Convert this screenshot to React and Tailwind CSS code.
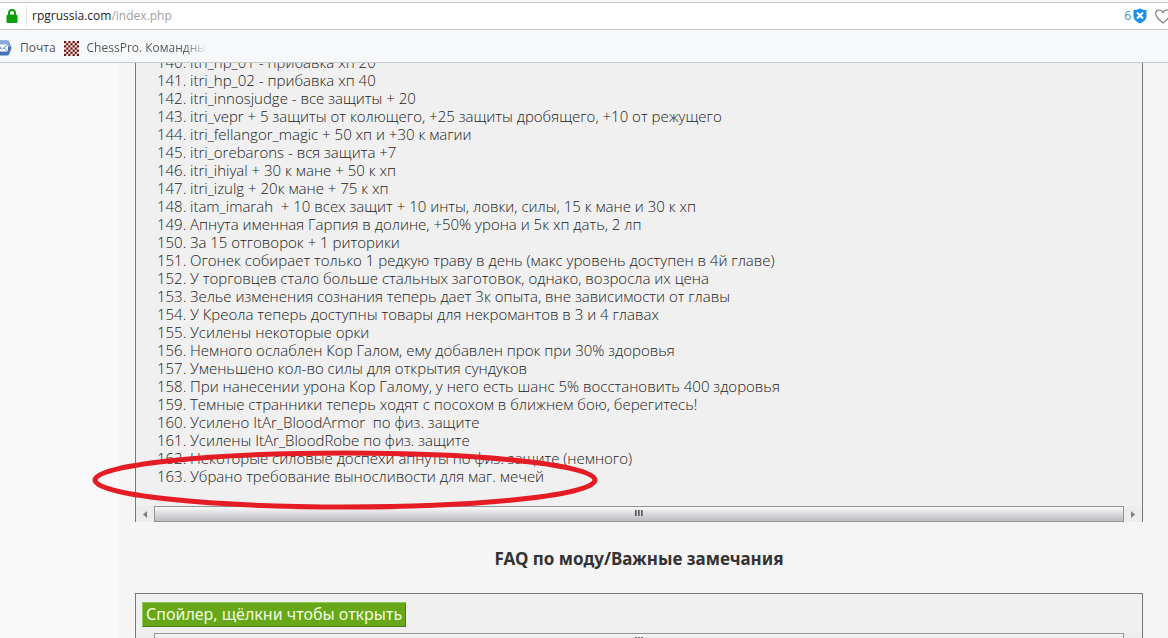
import React from 'react';

const changes = [
  'itri_hp_01 - прибавка хп 20',
  'itri_hp_02 - прибавка хп 40',
  'itri_innosjudge - все защиты + 20',
  'itri_vepr + 5 защиты от колющего, +25 защиты дробящего, +10 от режущего',
  'itri_fellangor_magic + 50 хп и +30 к магии',
  'itri_orebarons - вся защита +7',
  'itri_ihiyal + 30 к мане + 50 к хп',
  'itri_izulg + 20к мане + 75 к хп',
  'itam_imarah  + 10 всех защит + 10 инты, ловки, силы, 15 к мане и 30 к хп',
  'Апнута именная Гарпия в долине, +50% урона и 5к хп дать, 2 лп',
  'За 15 отговорок + 1 риторики',
  'Огонек собирает только 1 редкую траву в день (макс уровень доступен в 4й главе)',
  'У торговцев стало больше стальных заготовок, однако, возросла их цена',
  'Зелье изменения сознания теперь дает 3к опыта, вне зависимости от главы',
  'У Креола теперь доступны товары для некромантов в 3 и 4 главах',
  'Усилены некоторые орки',
  'Немного ослаблен Кор Галом, ему добавлен прок при 30% здоровья',
  'Уменьшено кол-во силы для открытия сундуков',
  'При нанесении урона Кор Галому, у него есть шанс 5% восстановить 400 здоровья',
  'Темные странники теперь ходят с посохом в ближнем бою, берегитесь!',
  'Усилено ItAr_BloodArmor  по физ. защите',
  'Усилены ItAr_BloodRobe по физ. защите',
  'Некоторые силовые доспехи апнуты по физ. защите (немного)',
  'Убрано требование выносливости для маг. мечей',
];

const FIRST_NUMBER = 140;

const LockIcon = () => (
  <svg width="12" height="14" viewBox="0 0 12 14" aria-hidden="true">
    <path d="M3 6V4a3 3 0 0 1 6 0v2" fill="none" stroke="#0a9f0a" strokeWidth="2" />
    <rect x="0.5" y="5.5" width="11" height="8.5" rx="1.5" fill="#0a9f0a" />
  </svg>
);

const ShieldIcon = () => (
  <svg width="14" height="16" viewBox="0 0 14 16" aria-hidden="true">
    <path d="M0.5 2Q4 2 7 0.5Q10 2 13.5 2V8Q13.5 13 7 15.5Q0.5 13 0.5 8Z" fill="#1b8fe6" />
    <path d="M4 4.5L10 10.5M10 4.5L4 10.5" stroke="#fff" strokeWidth="2" />
  </svg>
);

const HeartIcon = () => (
  <svg width="16" height="15" viewBox="0 0 16 15" aria-hidden="true">
    <path
      d="M8 14C5 11.5 0.7 8.5 0.7 4.7C0.7 2.5 2.3 1 4.3 1C6 1 7.4 2 8 3.6C8.6 2 10 1 11.7 1C13.7 1 15.3 2.5 15.3 4.7C15.3 8.5 11 11.5 8 14Z"
      fill="#fff"
      stroke="#777"
      strokeWidth="1.2"
    />
  </svg>
);

const MailIcon = () => (
  <svg width="12" height="16" viewBox="0 0 12 16" aria-hidden="true">
    <path d="M0 0.5H7Q8.5 0.5 9.2 2L11.5 8L9.2 14Q8.5 15.5 7 15.5H0Z" fill="#4672b8" />
    <path d="M0 1H7Q8.2 1 8.8 2.5L10.5 7H0Z" fill="#86a8dc" />
    <rect x="-3" y="4.5" width="11" height="7" fill="#fff" />
    <path d="M-3 4.5L2.5 9L8 4.5M-3 11.5L1 8M8 11.5L4 8" fill="none" stroke="#6b90cc" />
  </svg>
);

const ChessIcon = () => {
  const cells = [];
  for (let row = 0; row < 7; row++) {
    for (let col = 0; col < 7; col++) {
      if ((row + col) % 2 === 0) cells.push([col, row]);
    }
  }
  return (
    <svg width="15" height="15" viewBox="0 0 7 7" aria-hidden="true">
      <rect width="7" height="7" fill="#f6e9e4" />
      {cells.map(([x, y]) => (
        <rect key={`${x}-${y}`} x={x} y={y} width="1" height="1" fill="#6b1010" />
      ))}
    </svg>
  );
};

const ScrollBar = () => (
  <div className="flex h-4 shrink-0 bg-[#ececec]">
    <button type="button" aria-label="Влево" className="flex w-[18px] items-center justify-center">
      <svg width="4" height="7" viewBox="0 0 4 7" aria-hidden="true">
        <path d="M4 0V7L0 3.5Z" fill="#808080" />
      </svg>
    </button>
    <div className="flex flex-1 items-center justify-center gap-px border border-[#949498] bg-linear-to-b from-[#f4f4f5] from-10% via-[#d9d9dc] via-50% to-[#bcbcc0] pb-0.5">
      <span className="h-[6px] w-[2px] bg-linear-to-r from-[#444] to-[#999]" />
      <span className="h-[6px] w-[2px] bg-linear-to-r from-[#444] to-[#999]" />
      <span className="h-[6px] w-[2px] bg-linear-to-r from-[#444] to-[#999]" />
    </div>
    <button type="button" aria-label="Вправо" className="flex w-[18px] items-center justify-center">
      <svg width="4" height="7" viewBox="0 0 4 7" aria-hidden="true">
        <path d="M0 0V7L4 3.5Z" fill="#808080" />
      </svg>
    </button>
  </div>
);

const AddressBar = () => (
  <div className="bg-[#f6f8fa] pt-[2px]">
    <div className="flex h-7 items-center border-y border-[#c3c7c9] bg-white pl-1.5">
      <LockIcon />
      <a href="#address" className="ml-2 flex-1 border-l border-[#e4e4e4] pl-[5px] text-[12px] leading-5 text-[#222]">
        rpgrussia.com<span className="text-[#a0a0a0]">/index.php</span>
      </a>
      <button type="button" className="flex items-center gap-0.5 text-[12px] text-[#3b8fc4]">
        6
        <ShieldIcon />
      </button>
      <button type="button" aria-label="В закладки" className="-mr-[3px] ml-2">
        <HeartIcon />
      </button>
    </div>
  </div>
);

const BookmarksBar = () => (
  <nav className="flex h-[33px] items-center border-b border-[#c3cacd] bg-[#f6f8fa] pt-1 text-[12px] text-[#555]">
    <a href="#mail" className="flex items-center gap-2">
      <MailIcon />
      Почта
    </a>
    <a href="#chess" className="ml-2 flex items-center gap-2">
      <ChessIcon />
      <span className="bg-linear-to-r from-[#555] from-80% to-[#f6f8fa] bg-clip-text text-transparent">
        ChessPro. Командны
      </span>
    </a>
  </nav>
);

const App = () => {
  return (
    <div className="flex h-screen flex-col overflow-hidden bg-[#f9f9f9] font-['Open_Sans','Noto_Sans',sans-serif]">
      <AddressBar />
      <BookmarksBar />

      <main className="relative flex-1 overflow-hidden pl-[118px]">
        <div className="h-full bg-[#f5f5f5] pr-[25px] pl-[17px]">
          <section className="overflow-hidden border-x border-[#777] bg-[#f0f0f0]">
            {/* the list is scrolled half a row under the toolbar */}
            <ol className="-mt-[10px] pb-[21px] pl-[21px] text-[15px] leading-[18px] font-light text-[#222]">
              {changes.map((text, i) => (
                <li key={i} className="flex whitespace-pre">
                  <span className="w-[33px]">{FIRST_NUMBER + i}.</span>
                  <span>{text}</span>
                </li>
              ))}
            </ol>
            <ScrollBar />
          </section>

          <h2 className="pt-[25px] pb-[22px] text-center font-['Noto_Sans',sans-serif] text-[17px] leading-6 font-bold text-[#333]">
            FAQ по моду/Важные замечания
          </h2>

          <section className="border border-[#777] bg-[#f0f0f0]">
            <div className="px-1.5 pt-2 pb-1.5">
              <button
                type="button"
                className="block border border-t-[#8fc85a] border-r-[#4a7d14] border-b-[#4a7d14] border-l-[#8fc85a] bg-[#66a818] px-[3px] font-['Noto_Sans',sans-serif] text-[16px] leading-[23px] text-[#f4fbe0]"
              >
                Спойлер, щёлкни чтобы открыть
              </button>
            </div>
            <ScrollBar />
          </section>
        </div>

        {/* hand-drawn highlight around the last entry */}
        <svg className="pointer-events-none absolute top-[386px] left-[91px]" width="508" height="62" viewBox="0 0 508 62" aria-hidden="true">
          <ellipse cx="254" cy="31" rx="250" ry="27" fill="none" stroke="#e51c23" strokeWidth="5" />
        </svg>
      </main>
    </div>
  );
};

export default App;
